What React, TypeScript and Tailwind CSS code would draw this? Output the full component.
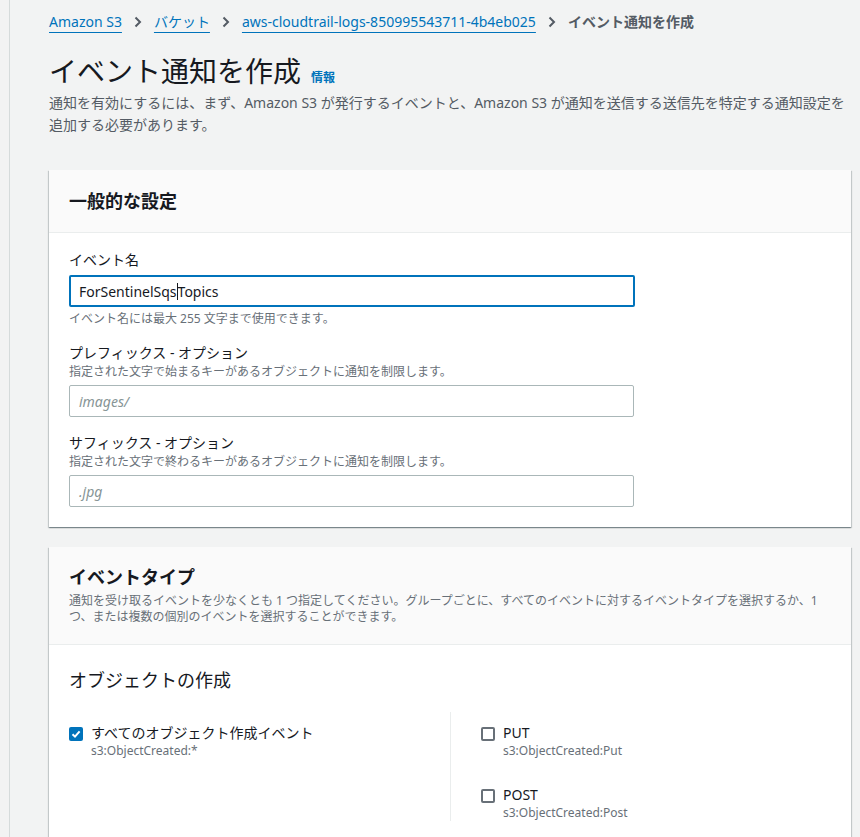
import React from "react";

function Chevron() {
  return (
    <svg width="10" height="12" viewBox="0 0 10 12" className="mx-[11px] shrink-0">
      <polyline points="2.5,1.5 7,6 2.5,10.5" fill="none" stroke="#545b64" strokeWidth="2" />
    </svg>
  );
}

function Checkbox({ checked }: { checked?: boolean }) {
  if (checked) {
    return (
      <span className="mt-[4px] flex h-[14px] w-[14px] shrink-0 items-center justify-center rounded-[2px] bg-[#0073bb]">
        <svg width="10" height="10" viewBox="0 0 10 10">
          <polyline points="1.5,5.2 4,7.6 8.6,2.4" fill="none" stroke="#fff" strokeWidth="2" />
        </svg>
      </span>
    );
  }
  return <span className="mt-[4px] h-[14px] w-[14px] shrink-0 rounded-[2px] border-2 border-[#687078] bg-white" />;
}

function EventOption({ label, api, checked }: { label: string; api: string; checked?: boolean }) {
  return (
    <div className="flex gap-[8px]">
      <Checkbox checked={checked} />
      <div>
        <div className="text-[14px] leading-[20px] text-[#16191f]">{label}</div>
        <div className="text-[12px] leading-[16px] text-[#687078]">{api}</div>
      </div>
    </div>
  );
}

function Field({ label, hint, placeholder }: { label: string; hint: string; placeholder: string }) {
  return (
    <div className="mt-[15px]">
      <div className="text-[14px] leading-[22px] text-[#16191f]">{label}</div>
      <div className="text-[12px] leading-[16px] text-[#687078]">{hint}</div>
      <div className="mt-[5px] flex h-[32px] w-[565px] items-center rounded-[2px] border border-[#aab7b8] bg-white px-[9px] text-[14px] italic text-[#879596]">
        {placeholder}
      </div>
    </div>
  );
}

const panel =
  "bg-white shadow-[0_1px_1px_0_rgba(0,28,36,0.3),1px_1px_1px_0_rgba(0,28,36,0.15),-1px_1px_1px_0_rgba(0,28,36,0.15)]";

export default function App() {
  return (
    <div className="flex h-screen overflow-hidden bg-[#f2f3f3] font-['Noto_Sans','Noto_Sans_CJK_JP',sans-serif] text-[#16191f]">
      <div className="w-[10px] shrink-0 border-r border-[#d5dbdb]" />
      <main className="flex-1 pl-[39px] pr-[9px] pt-[12px]">
        <nav className="flex items-center text-[14px] leading-[20px]">
          <a className="text-[#0073bb] underline underline-offset-[5px]">Amazon S3</a>
          <Chevron />
          <a className="text-[#0073bb] underline underline-offset-[5px]">バケット</a>
          <Chevron />
          <a className="text-[#0073bb] underline underline-offset-[5px]">aws-cloudtrail-logs-850995543711-4b4eb025</a>
          <Chevron />
          <span className="font-bold text-[#545b64]">イベント通知を作成</span>
        </nav>

        <div className="mt-[21px] flex items-baseline gap-[10px]">
          <h1 className="text-[28px] leading-[36px] font-normal">イベント通知を作成</h1>
          <a className="text-[12px] font-bold text-[#0073bb]">情報</a>
        </div>
        <p className="mt-[3px] whitespace-nowrap text-[14px] leading-[22px] text-[#545b64]">
          通知を有効にするには、まず、Amazon S3 が発行するイベントと、Amazon S3 が通知を送信する送信先を特定する通知設定を
          <br />
          追加する必要があります。
        </p>

        <section className={`mt-[34px] ${panel}`}>
          <div className="border-b border-[#eaeded] bg-[#fafafa] px-[20px] py-[18px]">
            <h2 className="text-[18px] leading-[26px] font-bold">一般的な設定</h2>
          </div>
          <div className="px-[20px] pb-[20px] pt-[16px]">
            <div className="text-[14px] leading-[22px]">イベント名</div>
            <div className="mt-[4px] flex h-[32px] w-[566px] items-center rounded-[2px] border-2 border-[#0073bb] bg-white px-[8px] text-[14px]">
              <span>ForSentinelSqs</span>
              <span className="h-[17px] w-px bg-[#16191f]" />
              <span>Topics</span>
            </div>
            <div className="mt-[4px] text-[12px] leading-[16px] text-[#687078]">
              イベント名には最大 255 文字まで使用できます。
            </div>
            <Field
              label="プレフィックス - オプション"
              hint="指定された文字で始まるキーがあるオブジェクトに通知を制限します。"
              placeholder="images/"
            />
            <Field
              label="サフィックス - オプション"
              hint="指定された文字で終わるキーがあるオブジェクトに通知を制限します。"
              placeholder=".jpg"
            />
          </div>
        </section>

        <section className={`mt-[20px] ${panel}`}>
          <div className="border-b border-[#eaeded] bg-[#fafafa] px-[20px] pb-[19px] pt-[17px]">
            <h2 className="text-[18px] leading-[26px] font-bold">イベントタイプ</h2>
            <p className="mt-[3px] whitespace-nowrap text-[12px] leading-[16px] text-[#687078]">
              通知を受け取るイベントを少なくとも 1 つ指定してください。グループごとに、すべてのイベントに対するイベントタイプを選択するか、1
              <br />
              つ、または複数の個別のイベントを選択することができます。
            </p>
          </div>
          <div className="px-[20px] pb-[20px] pt-[22px]">
            <h3 className="text-[18px] leading-[26px] font-normal">オブジェクトの作成</h3>
            <div className="mt-[19px] grid grid-cols-2">
              <div className="pt-[11px]">
                <EventOption checked label="すべてのオブジェクト作成イベント" api="s3:ObjectCreated:*" />
              </div>
              <div className="flex flex-col gap-[26px] border-l border-[#eaeded] pl-[30px] pt-[11px]">
                <EventOption label="PUT" api="s3:ObjectCreated:Put" />
                <EventOption label="POST" api="s3:ObjectCreated:Post" />
              </div>
            </div>
          </div>
        </section>
      </main>
    </div>
  );
}
